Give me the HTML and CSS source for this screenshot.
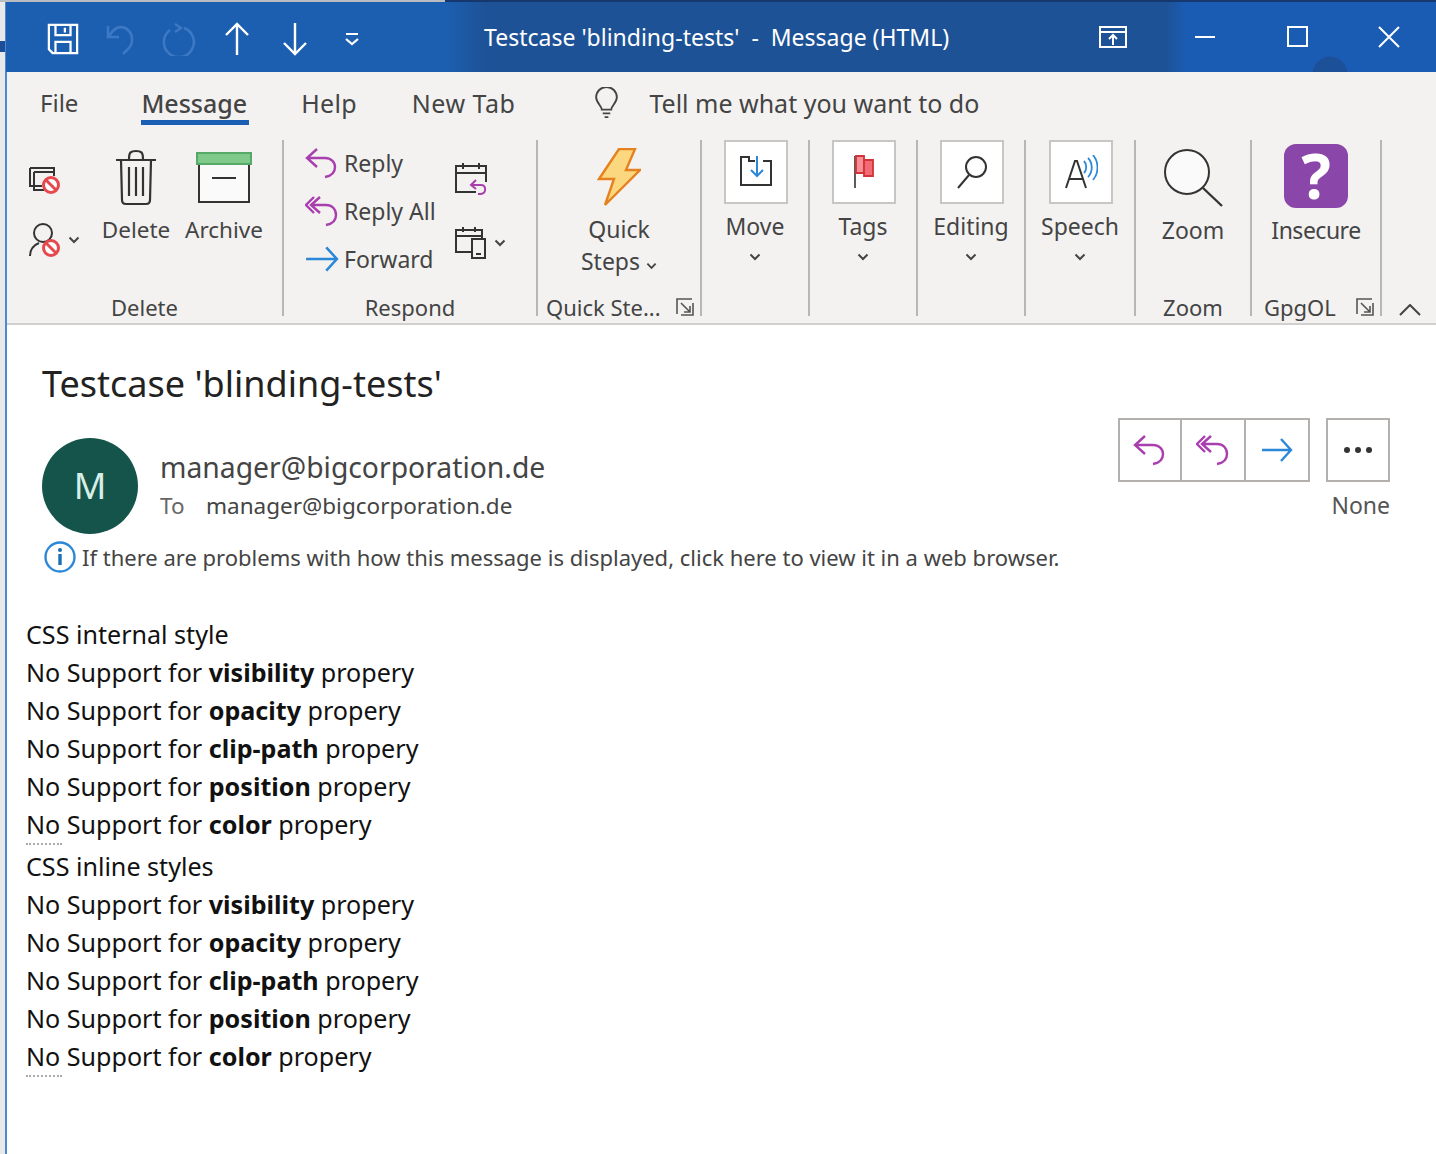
FILE: index.html
```html
<!DOCTYPE html>
<html lang="en">
<head>
    <meta charset="UTF-8">
    <title>Testcase 'blinding-tests' - Message (HTML)</title>
    <link rel="stylesheet" href="styles.css">
</head>
<body>
    <svg class="sprites" width="0" height="0">
        <symbol id="reply" viewBox="0 0 34 34"><path d="M12 3 2 12l10 9M2 12h18c6 0 10 4 10 9 0 6-4 9-10 10" fill="none" stroke="currentColor" stroke-width="2.4"/></symbol>
        <symbol id="replyall" viewBox="0 0 34 34"><path d="M9 3 1 11l8 8M15 3 6 11l9 8M6 11h15c6 0 10 4 10 10 0 6-4 9-10 10" fill="none" stroke="currentColor" stroke-width="2.4"/></symbol>
        <symbol id="forward" viewBox="0 0 32 26"><path d="M1 13h29M20 2l10 11-10 11" fill="none" stroke="currentColor" stroke-width="2.4"/></symbol>
        <symbol id="chev" viewBox="0 0 12 8"><path d="M1.500 1.500 6 6l4.500-4.500" fill="none" stroke="currentColor" stroke-width="2"/></symbol>
        <symbol id="launcher" viewBox="0 0 18 18"><path d="M1 16V1h15M5 5l9 9M14 8v6H8M17 5v12H5" fill="none" stroke="#555" stroke-width="1.600"/></symbol>
        <symbol id="nope" viewBox="0 0 20 20"><circle cx="10" cy="10" r="7.500" fill="#fff" stroke="#e5484d" stroke-width="3"/><path d="M5 5l10 10" stroke="#e5484d" stroke-width="3"/></symbol>
    </svg>

    <div class="top-strip"></div>
    <div class="window">
        <div class="titlebar">
            <div class="qat">
                <svg class="qat-save" viewBox="0 0 34 34"><path d="M2 2h30v30H6l-4-4zM9 2v11h16V2M19 5v5M9 32V20h16v12" fill="none" stroke="#fff" stroke-width="2.400"/></svg>
                <svg class="qat-undo" viewBox="0 0 30 34"><path d="M2 4v11h11M3 14C8 6 14 4 19 6c8 4 9 14 4 20l-6 6" fill="none" stroke="#3d78c4" stroke-width="2.600"/></svg>
                <svg class="qat-redo" viewBox="0 0 34 34"><path d="M13 2l6 4-6 4" fill="none" stroke="#3d78c4" stroke-width="2.400"/><path d="M8 8a15 15 0 1 0 14-2" fill="none" stroke="#3d78c4" stroke-width="2.600"/></svg>
                <svg class="qat-arrow" viewBox="0 0 26 34"><path d="M13 33V2M2 13 13 2l11 11" fill="none" stroke="#fff" stroke-width="2.400"/></svg>
                <svg class="qat-arrow" viewBox="0 0 26 34"><path d="M13 1v31M2 21l11 11 11-11" fill="none" stroke="#fff" stroke-width="2.400"/></svg>
                <svg class="qat-more" viewBox="0 0 16 14"><path d="M2 2h12M2 7l6 5 6-5" fill="none" stroke="#fff" stroke-width="2.200"/></svg>
            </div>
            <div class="doc-title">Testcase 'blinding-tests'&nbsp; -&nbsp; Message (HTML)</div>
            <div class="win-controls">
                <svg class="win-btn" viewBox="0 0 28 22"><path d="M1 1h26v20H1zM1 6h26M14 19V9M10 13l4-4 4 4" fill="none" stroke="#fff" stroke-width="2"/></svg>
                <svg class="win-btn" viewBox="0 0 28 22"><path d="M4 11h20" fill="none" stroke="#fff" stroke-width="2"/></svg>
                <svg class="win-btn" viewBox="0 0 28 22"><path d="M5 1h19v19H5z" fill="none" stroke="#fff" stroke-width="2"/></svg>
                <svg class="win-btn" viewBox="0 0 28 22"><path d="M4 1l20 20M24 1 4 21" fill="none" stroke="#fff" stroke-width="2"/></svg>
            </div>
        </div>

        <div class="tabs">
            <span class="tab tab-file">File</span>
            <span class="tab tab-message active">Message</span>
            <span class="tab tab-help">Help</span>
            <span class="tab tab-new">New Tab</span>
            <svg class="bulb" viewBox="0 0 26 34"><path d="M8 24c0-4-6-7-6-13a11 11 0 0 1 22 0c0 6-6 9-6 13zM9 28h8M11 32h4" fill="none" stroke="#444" stroke-width="2"/></svg>
            <span class="tell-me">Tell me what you want to do</span>
        </div>

        <div class="ribbon">
            <div class="group group-delete">
                <div class="group-body">
                    <div class="small-stack">
                        <svg class="ignore" viewBox="0 0 34 32"><path d="M2 4h24v8M2 4v18h12M6 8v18h10M6 8h20" fill="none" stroke="#333" stroke-width="2"/><use href="#nope" x="13" y="11" width="20" height="20"/></svg>
                        <div class="junk">
                            <svg class="junk-icon" viewBox="0 0 34 36"><circle cx="15" cy="11" r="9" fill="none" stroke="#333" stroke-width="2"/><path d="M2 34c0-7 4-11 9-13" fill="none" stroke="#333" stroke-width="2"/><use href="#nope" x="13" y="16" width="20" height="20"/></svg>
                            <svg class="chev-sm"><use href="#chev"/></svg>
                        </div>
                    </div>
                    <div class="big-btn btn-del">
                        <svg class="big-icon" viewBox="0 0 42 58"><path d="M1 12h40M14 11c0-7 2-8 7-8s7 1 7 8M6 12l1 40c0 3 2 4 4 4h20c2 0 4-1 4-4l1-40M14 19v29M21 19v29M28 19v29" fill="none" stroke="#333" stroke-width="2.200"/></svg>
                        <span>Delete</span>
                    </div>
                    <div class="big-btn btn-arc">
                        <svg class="big-icon" viewBox="0 0 56 52"><path d="M3 12h50v38H3z" fill="#fafafa" stroke="#333" stroke-width="2"/><path d="M1 1h54v11H1z" fill="#7fc98b" stroke="#55a866" stroke-width="2"/><path d="M16 26h24" stroke="#333" stroke-width="2"/></svg>
                        <span>Archive</span>
                    </div>
                </div>
                <div class="group-label">Delete</div>
            </div>

            <div class="group group-respond">
                <div class="group-body">
                    <div class="respond-list">
                        <div class="respond-row"><svg class="row-icon purple"><use href="#reply"/></svg>Reply</div>
                        <div class="respond-row"><svg class="row-icon purple"><use href="#replyall"/></svg>Reply All</div>
                        <div class="respond-row"><svg class="row-icon blue"><use href="#forward"/></svg>Forward</div>
                    </div>
                    <div class="respond-side">
                        <svg class="cal" viewBox="0 0 34 34"><path d="M22 30H2V4h30v16M2 11h30M9 1v6M25 1v6" fill="none" stroke="#333" stroke-width="2"/><path d="M22 18l-5 5 5 4M17 23h10c5 0 6 8 0 9h-3" fill="none" stroke="#a93fae" stroke-width="2"/></svg>
                        <div class="cal-more">
                            <svg class="cal" viewBox="0 0 34 34"><path d="M18 26H2V4h26v8M2 10h26M9 1v5M21 1v5M18 13h13v19H18zM22 28h5" fill="none" stroke="#333" stroke-width="2"/></svg>
                            <svg class="chev-sm"><use href="#chev"/></svg>
                        </div>
                    </div>
                </div>
                <div class="group-label">Respond</div>
            </div>

            <div class="group group-quick">
                <div class="group-body stacked">
                    <svg class="big-icon bolt" viewBox="0 0 44 58"><path d="M22 1h16l-9 21h14L8 57l9-26H2z" fill="#fbd77f" stroke="#e5821f" stroke-width="2.400"/></svg>
                    <span class="btn-text">Quick</span>
                    <span class="btn-text">Steps <svg class="chev-xs"><use href="#chev"/></svg></span>
                </div>
                <div class="group-label label-left">Quick Ste... <svg class="launcher"><use href="#launcher"/></svg></div>
            </div>

            <div class="group group-move">
                <div class="group-body stacked top">
                    <div class="tile"><svg viewBox="0 0 34 34"><path d="M1 2h9v4h6M24 6h8v24H2V2" fill="none" stroke="#333" stroke-width="2"/><path d="M18 1v20M12 15l6 6 6-6" fill="none" stroke="#2b88d8" stroke-width="2"/></svg></div>
                    <span class="btn-text">Move</span>
                    <svg class="chev-col"><use href="#chev"/></svg>
                </div>
            </div>
            <div class="group group-tags">
                <div class="group-body stacked top">
                    <div class="tile"><svg viewBox="0 0 34 34"><path d="M8 1v32" stroke="#333" stroke-width="1.600"/><path d="M9 1h8v17H9z" fill="#f88f97" stroke="#d13438" stroke-width="1.800"/><path d="M17 5h9v16H17z" fill="#f46a74" stroke="#d13438" stroke-width="1.800"/></svg></div>
                    <span class="btn-text">Tags</span>
                    <svg class="chev-col"><use href="#chev"/></svg>
                </div>
            </div>
            <div class="group group-editing">
                <div class="group-body stacked top">
                    <div class="tile"><svg viewBox="0 0 34 34"><circle cx="21" cy="12" r="10" fill="none" stroke="#333" stroke-width="2"/><path d="M14 20 3 33" stroke="#333" stroke-width="2"/></svg></div>
                    <span class="btn-text">Editing</span>
                    <svg class="chev-col"><use href="#chev"/></svg>
                </div>
            </div>
            <div class="group group-speech">
                <div class="group-body stacked top">
                    <div class="tile"><svg viewBox="0 0 34 34"><path d="M2 33 11 6h2l9 27M5 24h14" fill="none" stroke="#333" stroke-width="2"/><path d="M20 6c3 3 3 9 0 12M24 3c5 5 5 14 0 19M29 0c6 7 6 18 0 25" fill="none" stroke="#2b88d8" stroke-width="1.800"/></svg></div>
                    <span class="btn-text">Speech</span>
                    <svg class="chev-col"><use href="#chev"/></svg>
                </div>
            </div>
            <div class="group group-zoom">
                <div class="group-body stacked">
                    <svg class="big-icon zoom-icon" viewBox="0 0 60 60"><circle cx="24" cy="24" r="22" fill="#fafafa" stroke="#333" stroke-width="2"/><path d="M40 40 59 58" stroke="#333" stroke-width="2.400"/></svg>
                    <span class="btn-text">Zoom</span>
                </div>
                <div class="group-label">Zoom</div>
            </div>
            <div class="group group-gpgol">
                <div class="group-body stacked">
                    <div class="insecure">?</div>
                    <span class="btn-text btn-tight">Insecure</span>
                </div>
                <div class="group-label label-left label-gpg">GpgOL <svg class="launcher"><use href="#launcher"/></svg></div>
            </div>
            <svg class="collapse" viewBox="0 0 22 12"><path d="M1 11 11 1l10 10" fill="none" stroke="#444" stroke-width="2"/></svg>
        </div>

        <div class="message">
            <div class="subject">Testcase 'blinding-tests'</div>
            <div class="msg-head">
                <div class="avatar">M</div>
                <div class="sender">
                    <div class="sender-name">manager@bigcorporation.de</div>
                    <div class="sender-to"><span class="to-label">To</span>manager@bigcorporation.de</div>
                </div>
                <div class="msg-actions">
                    <div class="action-row">
                        <div class="action-group">
                            <div class="action purple"><svg><use href="#reply"/></svg></div>
                            <div class="action purple"><svg><use href="#replyall"/></svg></div>
                            <div class="action blue"><svg class="action-fwd"><use href="#forward"/></svg></div>
                        </div>
                        <div class="action more"><i></i><i></i><i></i></div>
                    </div>
                    <div class="none-label">None</div>
                </div>
            </div>
            <div class="info-line">
                <svg class="info-icon" viewBox="0 0 32 32"><circle cx="16" cy="16" r="14.500" fill="none" stroke="#2b88d8" stroke-width="2.400"/><path d="M16 13v11" stroke="#1a6fb5" stroke-width="3.400"/><circle cx="16" cy="9" r="2" fill="#1a6fb5"/></svg>
                If there are problems with how this message is displayed, click here to view it in a web browser.
            </div>
            <div class="mail-body">
                <p>CSS internal style</p>
                <p>No Support for <b>visibility</b> propery</p>
                <p>No Support for <b>opacity</b> propery</p>
                <p>No Support for <b>clip-path</b> propery</p>
                <p>No Support for <b>position</b> propery</p>
                <p>No Support for <b>color</b> propery</p>
                <div class="mark"></div>
                <p>CSS inline styles</p>
                <p>No Support for <b>visibility</b> propery</p>
                <p>No Support for <b>opacity</b> propery</p>
                <p>No Support for <b>clip-path</b> propery</p>
                <p>No Support for <b>position</b> propery</p>
                <p>No Support for <b>color</b> propery</p>
                <div class="mark"></div>
            </div>
        </div>
    </div>
</body>
</html>
```

FILE: styles.css
```css
html, body {
    margin: 0;
    padding: 0;
    height: 100%;
    overflow: hidden;
    font-family: "Noto Sans", "Open Sans", sans-serif;
    color: #444;
}

body {
    background: linear-gradient(#1c4d96, #1c4d96) 0 41px / 5px 11px no-repeat, #e9e9e9;
}

.sprites {
    display: block;
    height: 0;
}

.top-strip {
    height: 2px;
    background: linear-gradient(90deg, #b9bcc0 0, #b9bcc0 445px, #17386e 445px);
}

.window {
    margin-left: 5px;
    height: 1152px;
    border-left: 2px solid #4a8ad4;
    background: #fff;
}

/* title bar */
.titlebar {
    height: 70px;
    margin-left: -1px;
    display: flex;
    align-items: center;
    color: #fff;
    background:
        radial-gradient(circle at 1324px 72px, #1c5199 0 17px, transparent 18px),
        linear-gradient(90deg, #1c5fb0 0, #1c5fb0 440px, #1e5296 480px, #1e5296 1160px, #1a5cb4 1180px, #1a5cb4 100%);
}

.qat {
    width: 440px;
    flex: none;
    display: flex;
    align-items: center;
    padding-left: 41px;
    margin-top: 4px;
    box-sizing: border-box;
}

.qat svg {
    flex: none;
}

.qat-save {
    width: 32px;
    height: 32px;
    margin-right: 27px;
}

.qat-undo {
    width: 30px;
    height: 34px;
    margin-right: 26px;
}

.qat-redo {
    width: 34px;
    height: 34px;
    margin-right: 28px;
}

.qat-arrow {
    width: 26px;
    height: 34px;
    margin-right: 32px;
}

.qat-more {
    width: 16px;
    height: 14px;
    margin-left: 4px;
}

.doc-title {
    width: 580px;
    flex: none;
    padding-left: 38px;
    box-sizing: border-box;
    font-size: 23px;
    white-space: nowrap;
}

.win-controls {
    display: flex;
    gap: 64px;
    padding-left: 73px;
}

.win-btn {
    width: 28px;
    height: 22px;
}

/* tabs */
.tabs {
    height: 58px;
    display: flex;
    align-items: center;
    background: #f3f2f1;
    font-size: 25px;
    padding-top: 3px;
    box-sizing: border-box;
}

.tab {
    position: relative;
    white-space: nowrap;
    letter-spacing: .3px;
}

.tab-file { margin-left: 33px; letter-spacing: 0; font-size: 24px; }
.tab-message { margin-left: 63px; font-weight: 500; letter-spacing: 0; }
.tab-help { margin-left: 54px; }
.tab-new { margin-left: 55px; letter-spacing: .5px; }

.tab.active::after {
    content: "";
    position: absolute;
    left: 0;
    right: -2px;
    bottom: -5px;
    height: 5px;
    background: #1a5fb4;
}

.bulb {
    width: 25px;
    height: 32px;
    margin-left: 79px;
}

.tell-me {
    margin-left: 30px;
    white-space: nowrap;
}

/* ribbon */
.ribbon {
    height: 195px;
    display: flex;
    padding-top: 10px;
    box-sizing: border-box;
    background: #f3f2f1;
    border-bottom: 2px solid #d2d0ce;
    font-size: 23px;
    position: relative;
}

.group {
    height: 176px;
    flex: none;
    display: flex;
    flex-direction: column;
    border-right: 2px solid #b9b7b5;
    box-sizing: border-box;
}

.group-delete { width: 277px; }
.group-respond { width: 254px; }
.group-quick { width: 164px; }
.group-move, .group-tags, .group-editing { width: 108px; }
.group-speech { width: 110px; }
.group-zoom { width: 116px; }
.group-gpgol { width: 130px; }

.group-body {
    height: 150px;
    flex: none;
    display: flex;
}

.group-label {
    text-align: center;
    font-size: 22px;
    line-height: 30px;
    padding-top: 2px;
    white-space: nowrap;
    position: relative;
}

.label-left {
    text-align: left;
    padding-left: 8px;
}

.label-gpg {
    padding-left: 12px;
}

.launcher {
    position: absolute;
    right: 6px;
    top: 8px;
    width: 18px;
    height: 18px;
}

.small-stack {
    width: 96px;
    flex: none;
    padding: 24px 0 0 21px;
    box-sizing: border-box;
}

.ignore {
    width: 34px;
    height: 32px;
    display: block;
}

.junk {
    display: flex;
    align-items: center;
    margin-top: 26px;
}

.junk-icon {
    width: 34px;
    height: 36px;
}

.chev-sm {
    width: 12px;
    height: 8px;
    margin-left: 6px;
    color: #444;
}

.big-btn {
    display: flex;
    flex-direction: column;
    align-items: center;
    padding-top: 8px;
    font-size: 22.500px;
    white-space: nowrap;
}

.big-btn .big-icon {
    height: 58px;
    margin-bottom: 8px;
}

.btn-del { width: 66px; }
.btn-arc { width: 82px; margin-left: 14px; }

.btn-del .big-icon { width: 42px; }
.btn-arc .big-icon { width: 56px; height: 52px; margin-top: 4px; margin-bottom: 10px; }

.respond-list {
    padding: 0 0 0 21px;
    width: 150px;
    flex: none;
    box-sizing: border-box;
}

.respond-row {
    height: 48px;
    display: flex;
    align-items: center;
    white-space: nowrap;
    position: relative;
    top: -1px;
}

.row-icon {
    width: 34px;
    height: 34px;
    margin-right: 5px;
    flex: none;
}

.purple { color: #a93fae; }
.blue { color: #2b88d8; }

.respond-side {
    padding: 22px 0 0 20px;
}

.cal {
    width: 34px;
    height: 34px;
    display: block;
}

.cal-more {
    display: flex;
    align-items: center;
    margin-top: 30px;
}

.stacked {
    flex-direction: column;
    align-items: center;
    padding-top: 8px;
    box-sizing: border-box;
}

.stacked.top {
    padding-top: 0;
}

.btn-text {
    line-height: 32px;
    white-space: nowrap;
}

.btn-tight {
    letter-spacing: -.5px;
}

.bolt {
    width: 44px;
    height: 58px;
    margin-bottom: 7px;
}

.chev-xs {
    width: 11px;
    height: 8px;
    color: #444;
}

.tile {
    width: 64px;
    height: 64px;
    background: #fff;
    border: 2px solid #c8c6c4;
    box-sizing: border-box;
    display: flex;
    align-items: center;
    justify-content: center;
    margin: 0 0 6px 1px;
}

.tile svg {
    width: 34px;
    height: 34px;
}

.chev-col {
    width: 12px;
    height: 8px;
    margin-top: 11px;
    color: #444;
}

.zoom-icon {
    width: 60px;
    height: 60px;
    margin-bottom: 6px;
}

.insecure {
    width: 64px;
    height: 64px;
    border-radius: 12px;
    background: #8a46a8;
    color: #fff;
    font-size: 62px;
    font-weight: 700;
    line-height: 62px;
    text-align: center;
    margin: -4px 0 6px;
}

.collapse {
    position: absolute;
    left: 1392px;
    top: 174px;
    width: 22px;
    height: 12px;
}

/* message header */
.message {
    background: #fff;
    padding-top: 36px;
}

.subject {
    margin-left: 35px;
    font-size: 36px;
    line-height: 46px;
    color: #222;
}

.msg-head {
    display: flex;
    margin: 11px 0 0 35px;
    height: 118px;
}

.avatar {
    width: 96px;
    height: 96px;
    margin-top: 20px;
    border-radius: 50%;
    background: #14544a;
    color: #d8efe8;
    font-size: 36px;
    line-height: 96px;
    text-align: center;
    flex: none;
}

.sender {
    margin-left: 22px;
    padding-top: 29px;
}

.sender-name {
    font-size: 28.300px;
    line-height: 40px;
}

.sender-to {
    font-size: 22.500px;
    line-height: 38px;
}

.to-label {
    display: inline-block;
    width: 46px;
    color: #666;
}

.msg-actions {
    margin-left: auto;
    margin-right: 46px;
    display: flex;
    flex-direction: column;
    align-items: flex-end;
}

.action-row {
    display: flex;
    gap: 16px;
}

.action-group {
    display: flex;
}

.action {
    width: 64px;
    height: 64px;
    border: 2px solid #b3b0ad;
    box-sizing: border-box;
    display: flex;
    align-items: center;
    justify-content: center;
}

.action + .action {
    margin-left: -2px;
    width: 66px;
}

.action svg {
    width: 34px;
    height: 34px;
}

.action .action-fwd {
    width: 32px;
    height: 26px;
}

.more {
    gap: 5px;
}

.more i {
    width: 6px;
    height: 6px;
    border-radius: 50%;
    background: #333;
}

.none-label {
    font-size: 23px;
    line-height: 32px;
    margin-top: 7px;
    color: #555;
}

.info-line {
    display: flex;
    align-items: center;
    margin: 4px 0 0 37px;
    height: 34px;
    font-size: 22px;
    white-space: nowrap;
}

.info-icon {
    width: 32px;
    height: 32px;
    margin-right: 6px;
    flex: none;
}

/* mail body */
.mail-body {
    margin: 41px 0 0 19px;
    color: #111;
    font-size: 25.100px;
}

.mail-body p {
    margin: 0;
    line-height: 38px;
    white-space: nowrap;
}

.mark {
    width: 36px;
    height: 4px;
    border-top: 2px dotted #aaa;
    box-sizing: border-box;
}
```
